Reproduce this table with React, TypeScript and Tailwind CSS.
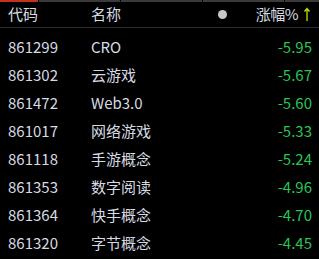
const rows = [
  { code: '861299', name: 'CRO', pct: '-5.95' },
  { code: '861302', name: '云游戏', pct: '-5.67' },
  { code: '861472', name: 'Web3.0', pct: '-5.60' },
  { code: '861017', name: '网络游戏', pct: '-5.33' },
  { code: '861118', name: '手游概念', pct: '-5.24' },
  { code: '861353', name: '数字阅读', pct: '-4.96' },
  { code: '861364', name: '快手概念', pct: '-4.70' },
  { code: '861320', name: '字节概念', pct: '-4.45' },
]

export default function App() {
  return (
    <div
      className="w-[319px] h-[259px] bg-black overflow-hidden text-[15px] text-[#d6dbe3]"
      style={{ fontFamily: '"Noto Sans CJK SC", "Noto Sans", sans-serif' }}
    >
      {/* Barra de pestañas */}
      <div className="flex gap-px h-[2px]">
        <div className="w-[38px] bg-[#c4321f]" />
        <div className="w-[81px] bg-[#3a3a3d]" />
        <div className="w-[81px] bg-[#3a3a3d]" />
        <div className="w-[81px] bg-[#3a3a3d]" />
        <div className="flex-1 bg-[#3a3a3d]" />
      </div>

      {/* Encabezado */}
      <div className="flex items-center h-[26px] border-b border-[#2a2a2c] pl-2 pr-[9px]">
        <span className="w-[83px]">代码</span>
        <span className="flex-1">名称</span>
        <span className="w-[9px] h-[9px] rounded-full bg-[#c8c8c8] mr-[29px]" />
        <span className="tracking-[-0.5px]">涨幅%</span>
        <svg className="ml-[6px]" width="6" height="15" viewBox="0 0 6 15">
          <path d="M3 14V1.5M0.5 4.5L3 1.5L5.5 4.5" stroke="#c6e000" strokeWidth="1.3" fill="none" />
        </svg>
      </div>

      {/* Filas */}
      <div className="pt-[5px]">
        {rows.map((r) => (
          <div key={r.code} className="flex items-center h-[28px] pl-2 pr-[7px]">
            <span className="w-[83px]">{r.code}</span>
            <span className="flex-1">{r.name}</span>
            <span className="text-[#2bc554]">{r.pct}</span>
          </div>
        ))}
      </div>
    </div>
  )
}
